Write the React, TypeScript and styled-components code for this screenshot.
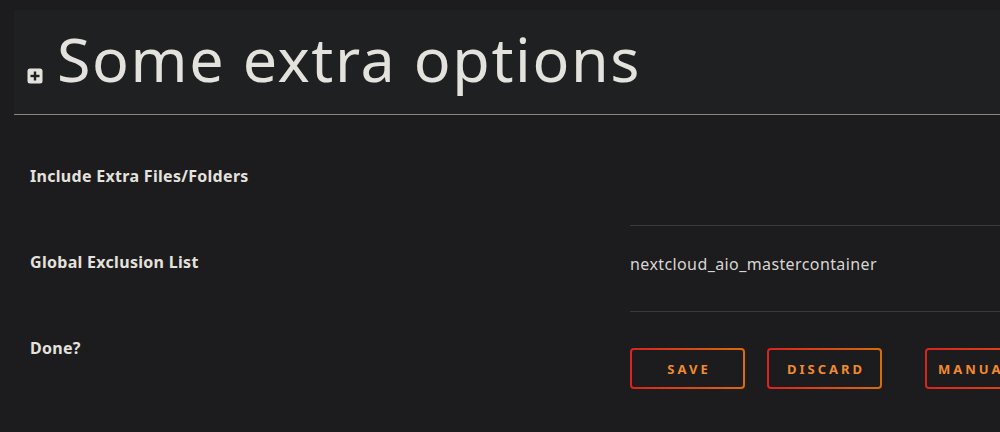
import React from "react";
import styled, { createGlobalStyle } from "styled-components";

const Global = createGlobalStyle`
  html, body { margin: 0; padding: 0; background: #1c1b1d; }
  body { font-family: "Noto Sans", "Open Sans", sans-serif; color: #e4e2dd; }
`;

const Page = styled.div`
  width: 1000px;
  height: 432px;
  overflow: hidden;
  padding-top: 10px;
  box-sizing: border-box;
  background: #1c1b1d;
`;

const TitleBar = styled.div`
  margin-left: 14px;
  height: 105px;
  background: #1f2022;
  border-bottom: 1px solid #8a8676;
  display: flex;
  align-items: flex-end;
  padding-left: 13px;
  padding-bottom: 24px;
  box-sizing: border-box;
`;

const Title = styled.h1`
  margin: 0 0 0 14px;
  font-family: "Noto Sans", sans-serif;
  font-weight: 400;
  font-size: 61px;
  line-height: 62px;
  letter-spacing: 1.6px;
  color: #e4e2dd;
  white-space: nowrap;
`;

const PlusIcon = styled.svg`
  width: 16px;
  height: 16px;
  flex: none;
  margin-bottom: 6px;
`;

const Rows = styled.div`
  margin-top: 25px;
`;

const Row = styled.div`
  display: grid;
  grid-template-columns: 600px 1fr;
  padding-left: 30px;
  height: 86px;
`;

const Label = styled.div`
  font-family: "Noto Sans", sans-serif;
  font-weight: 700;
  font-size: 16px;
  letter-spacing: 0.3px;
  line-height: 20px;
  padding-top: 26px;
  color: #e4e2dd;
`;

const Field = styled.div`
  border-bottom: 1px solid #3a3a3c;
  height: 86px;
  box-sizing: border-box;
  padding-top: 28px;
  font-family: "Noto Sans", sans-serif;
  font-size: 16px;
  letter-spacing: 0.4px;
  line-height: 20px;
  color: #d8d6d2;
`;

const Buttons = styled.div`
  display: flex;
  padding-top: 36px;
  white-space: nowrap;
`;

const Button = styled.button<{ $gap: number }>`
  flex: none;
  min-width: 115px;
  height: 41px;
  margin-right: ${(p) => p.$gap}px;
  border: 2px solid transparent;
  border-radius: 4px;
  background: linear-gradient(#1c1b1d, #1c1b1d) padding-box,
    linear-gradient(90deg, #d9231f 0%, #d86c0c 100%) border-box;
  color: #f28a30;
  font-family: "Noto Sans", sans-serif;
  font-weight: 700;
  font-size: 13px;
  letter-spacing: 3px;
  text-transform: uppercase;
  padding: 0 8px 0 11px;
  cursor: pointer;
`;

export default function App() {
  return (
    <Page>
      <Global />
      <TitleBar>
        <PlusIcon viewBox="0 0 16 16">
          <rect x="0.5" y="0.5" width="15" height="15" rx="2.5" fill="#e4e2dd" />
          <rect x="3.5" y="6.8" width="9" height="2.4" fill="#1f2022" />
          <rect x="6.8" y="3.5" width="2.4" height="9" fill="#1f2022" />
        </PlusIcon>
        <Title>Some extra options</Title>
      </TitleBar>
      <Rows>
        <Row>
          <Label>Include Extra Files/Folders</Label>
          <Field />
        </Row>
        <Row>
          <Label>Global Exclusion List</Label>
          <Field>nextcloud_aio_mastercontainer</Field>
        </Row>
        <Row>
          <Label>Done?</Label>
          <Buttons>
            <Button $gap={22}>Save</Button>
            <Button $gap={43}>Discard</Button>
            <Button $gap={0}>Manual Backup</Button>
          </Buttons>
        </Row>
      </Rows>
    </Page>
  );
}
